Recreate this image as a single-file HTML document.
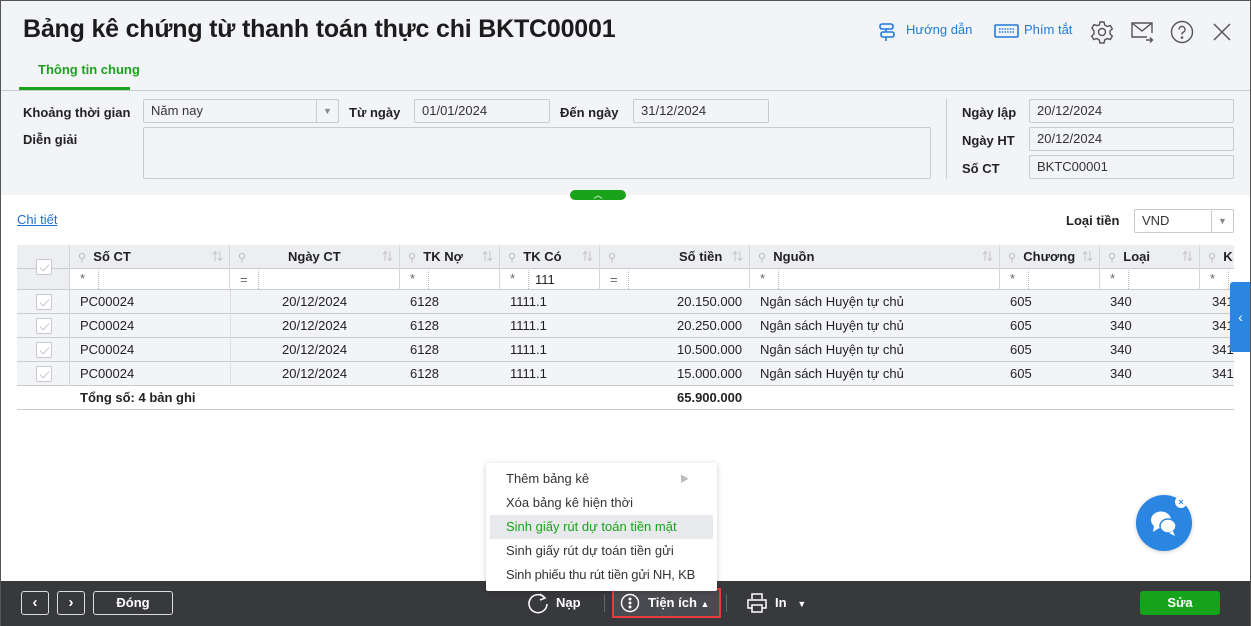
<!DOCTYPE html>
<html><head><meta charset="utf-8"><style>
*{box-sizing:border-box;margin:0;padding:0}
body{width:1251px;height:626px;overflow:hidden;font-family:"Liberation Sans","Noto Sans CJK SC",sans-serif;font-size:13px;color:#222;background:#fff;position:relative}
.a{position:absolute}
.frame{position:absolute;inset:0;border:1px solid #555;border-bottom:none;pointer-events:none}
.hdr{position:absolute;left:0;top:0;width:1251px;height:195px;background:#f3f4f8}
.lbl{position:absolute;font-weight:bold;font-size:13px;color:#222}
.inp{position:absolute;background:#f3f4f8;border:1px solid #c9cbd1;border-radius:2px;font-size:13px;color:#333;padding:0 0 0 7px;line-height:22px;height:24px}
.th{position:absolute;top:245px;height:24px;line-height:24px;font-weight:bold;border-right:1px solid #d4d6db}
.cell{position:absolute;height:24px;line-height:24px;white-space:nowrap}
.ck{position:absolute;width:16px;height:16px;border:1px solid #c6c8cc;border-radius:2px;background:#fff}
.ck::after{content:"";position:absolute;left:5px;top:2px;width:4px;height:8px;border:solid #c6c8cc;border-width:0 1.3px 1.3px 0;transform:rotate(45deg)}
.pin{color:#bbb;font-weight:normal;font-size:11px}
.sort{position:absolute;right:6px;color:#bbb;font-weight:normal;font-size:11px}
.menu div{height:24px;line-height:24px;padding-left:20px;font-size:13px;color:#333;white-space:nowrap}
.foot{position:absolute;left:0;top:581px;width:1251px;height:45px;background:#38393d}
.bb{position:absolute;top:591px;height:24px;border:1px solid #ddd;border-radius:3px;color:#fff;text-align:center;line-height:22px;font-weight:bold}
.dv{position:absolute;top:270px;height:19px;border-left:1px dotted #bbb}
</style></head><body>
<div class="hdr"></div>
<div class="a" style="left:23px;top:15px;font-size:25px;font-weight:bold;color:#1c1c1c;letter-spacing:-0.2px">Bảng kê chứng từ thanh toán thực chi BKTC00001</div>
<div class="a" style="left:38px;top:62px;font-size:13px;font-weight:bold;color:#1aa31a">Thông tin chung</div>
<div class="a" style="left:19px;top:87px;width:111px;height:3px;background:#1aa31a"></div>
<div class="a" style="left:0;top:90px;width:1251px;height:1px;background:#c9cbd1"></div>

<svg class="a" style="left:878px;top:22px" width="18" height="20" viewBox="0 0 18 20" fill="none" stroke="#1e7ad9" stroke-width="1.6"><rect x="2" y="2" width="13" height="5" rx="2"/><rect x="3" y="10" width="13" height="5" rx="2"/><path d="M8 7v3M8 15v4"/></svg>
<div class="a" style="left:906px;top:22px;color:#1e7ad9;font-size:13px">Hướng dẫn</div>
<svg class="a" style="left:994px;top:24px" width="25" height="14" viewBox="0 0 25 14" fill="none" stroke="#1e7ad9" stroke-width="1.6"><rect x="1" y="1" width="23" height="12" rx="1"/><path d="M5 5h15M5 8h15" stroke-dasharray="1.5 1.2"/></svg>
<div class="a" style="left:1024px;top:22px;color:#1e7ad9;font-size:13px">Phím tắt</div>
<svg class="a" style="left:1090px;top:20px" width="24" height="24" viewBox="0 0 24 24" fill="none" stroke="#555" stroke-width="1.4"><circle cx="12" cy="12" r="3.5"/><path d="M10 2h4l.7 3 2.6 1.5 3-1 2 3.4-2.3 2.1v3l2.3 2.1-2 3.4-3-1-2.6 1.5-.7 3h-4l-.7-3-2.6-1.5-3 1-2-3.4 2.3-2.1v-3L2 8l2-3.4 3 1L9.4 5z"/></svg>
<svg class="a" style="left:1130px;top:21px" width="24" height="22" viewBox="0 0 24 22" fill="none" stroke="#555" stroke-width="1.4"><path d="M17 16H2V2h20v10"/><path d="M2 2l10 8 10-8"/><path d="M16 19h6M20 16.5l2.5 2.5-2.5 2.5"/></svg>
<svg class="a" style="left:1170px;top:20px" width="24" height="24" viewBox="0 0 24 24" fill="none" stroke="#555" stroke-width="1.4"><circle cx="12" cy="12" r="10.5"/><path d="M9 9.5a3 3 0 1 1 4 2.8c-1 .4-1 1-1 2.2"/><circle cx="12" cy="17.5" r=".6" fill="#555"/></svg>
<svg class="a" style="left:1212px;top:22px" width="20" height="20" viewBox="0 0 20 20" stroke="#555" stroke-width="1.5"><path d="M2 2l16 16M18 2L2 18"/></svg>

<div class="lbl" style="left:23px;top:105px">Khoảng thời gian</div>
<div class="inp" style="left:143px;top:99px;width:196px;background:#f3f4f8">Năm nay<span style="position:absolute;right:0;top:0;width:22px;height:22px;border-left:1px solid #c9cbd1;text-align:center;color:#888;font-size:9px">▼</span></div>
<div class="lbl" style="left:349px;top:105px">Từ ngày</div>
<div class="inp" style="left:414px;top:99px;width:136px">01/01/2024</div>
<div class="lbl" style="left:560px;top:105px">Đến ngày</div>
<div class="inp" style="left:633px;top:99px;width:136px">31/12/2024</div>
<div class="lbl" style="left:23px;top:132px">Diễn giải</div>
<div class="inp" style="left:143px;top:127px;width:788px;height:52px"></div>
<div class="a" style="left:946px;top:99px;width:1px;height:80px;background:#c9cbd1"></div>
<div class="lbl" style="left:962px;top:105px">Ngày lập</div>
<div class="inp" style="left:1029px;top:99px;width:205px">20/12/2024</div>
<div class="lbl" style="left:962px;top:133px">Ngày HT</div>
<div class="inp" style="left:1029px;top:127px;width:205px">20/12/2024</div>
<div class="lbl" style="left:962px;top:161px">Số CT</div>
<div class="inp" style="left:1029px;top:155px;width:205px">BKTC00001</div>
<div class="a" style="left:570px;top:190px;width:56px;height:10px;background:#1aa31a;border-radius:5px;color:#fff;text-align:center;font-size:9px;line-height:10px">︿</div>

<div class="a" style="left:17px;top:212px;color:#1e6fd0;text-decoration:underline">Chi tiết</div>
<div class="lbl" style="left:1066px;top:213px">Loại tiền</div>
<div class="inp" style="left:1134px;top:209px;width:100px;background:#fff">VND<span style="position:absolute;right:0;top:0;width:22px;height:22px;border-left:1px solid #c9cbd1;text-align:center;color:#888;font-size:9px">▼</span></div>

<div class="a" style="left:17px;top:245px;width:1217px;height:24px;background:#eceef2"></div>
<div class="a" style="left:17px;top:269px;width:52px;height:21px;background:#eceef2"></div>
<div class="a" style="left:17px;top:268px;width:1217px;height:1px;background:#c9cbd1"></div>
<div class="a" style="left:17px;top:290px;width:1217px;height:96px;background:#f3f4f8"></div>
<div class="a" style="left:17px;top:289px;width:1217px;height:1px;background:#c9cbd1"></div>
<div class="a" style="left:17px;top:313px;width:1217px;height:1px;background:#c9cbd1"></div>
<div class="a" style="left:17px;top:337px;width:1217px;height:1px;background:#c9cbd1"></div>
<div class="a" style="left:17px;top:361px;width:1217px;height:1px;background:#c9cbd1"></div>
<div class="a" style="left:17px;top:385px;width:1217px;height:1px;background:#c9cbd1"></div>
<div class="a" style="left:17px;top:409px;width:1217px;height:1px;background:#c9cbd1"></div>
<div class="ck" style="left:36px;top:259px"></div>
<div class="a" style="left:69px;top:245px;width:1px;height:141px;background:#d4d6db"></div>

<div class="th" style="left:70px;width:160px;padding-left:8px"><span class="pin">⚲</span>&nbsp; Số CT<span class="sort">⇅</span></div>
<div class="th" style="left:230px;width:170px;padding-left:8px"><span class="pin">⚲</span><span style="position:absolute;left:58px">Ngày CT</span><span class="sort">⇅</span></div>
<div class="th" style="left:400px;width:100px;padding-left:8px"><span class="pin">⚲</span>&nbsp; TK Nợ<span class="sort">⇅</span></div>
<div class="th" style="left:500px;width:100px;padding-left:8px"><span class="pin">⚲</span>&nbsp; TK Có<span class="sort">⇅</span></div>
<div class="th" style="left:600px;width:150px;padding-left:8px"><span class="pin">⚲</span><span style="position:absolute;left:79px">Số tiền</span><span class="sort">⇅</span></div>
<div class="th" style="left:750px;width:250px;padding-left:8px"><span class="pin">⚲</span>&nbsp; Nguồn<span class="sort">⇅</span></div>
<div class="th" style="left:1000px;width:100px;padding-left:8px"><span class="pin">⚲</span>&nbsp; Chương<span class="sort">⇅</span></div>
<div class="th" style="left:1100px;width:100px;padding-left:8px"><span class="pin">⚲</span>&nbsp; Loại<span class="sort">⇅</span></div>
<div class="th" style="left:1200px;width:34px;padding-left:8px;border:none;overflow:hidden"><span class="pin">⚲</span>&nbsp; K</div>

<div class="a" style="left:229px;top:269px;width:1px;height:21px;background:#d4d6db"></div>
<div class="a" style="left:399px;top:269px;width:1px;height:21px;background:#d4d6db"></div>
<div class="a" style="left:499px;top:269px;width:1px;height:21px;background:#d4d6db"></div>
<div class="a" style="left:599px;top:269px;width:1px;height:21px;background:#d4d6db"></div>
<div class="a" style="left:749px;top:269px;width:1px;height:21px;background:#d4d6db"></div>
<div class="a" style="left:999px;top:269px;width:1px;height:21px;background:#d4d6db"></div>
<div class="a" style="left:1099px;top:269px;width:1px;height:21px;background:#d4d6db"></div>
<div class="a" style="left:1199px;top:269px;width:1px;height:21px;background:#d4d6db"></div>
<div class="dv" style="left:98px"></div><div class="dv" style="left:258px"></div><div class="dv" style="left:428px"></div><div class="dv" style="left:528px"></div><div class="dv" style="left:628px"></div><div class="dv" style="left:778px"></div><div class="dv" style="left:1028px"></div><div class="dv" style="left:1128px"></div><div class="dv" style="left:1228px"></div>

<div class="cell" style="left:80px;top:267px;color:#666">*</div>
<div class="cell" style="left:240px;top:268px;color:#666">=</div>
<div class="cell" style="left:410px;top:267px;color:#666">*</div>
<div class="cell" style="left:510px;top:267px;color:#666">*</div>
<div class="cell" style="left:535px;top:268px">111</div>
<div class="cell" style="left:610px;top:268px;color:#666">=</div>
<div class="cell" style="left:760px;top:267px;color:#666">*</div>
<div class="cell" style="left:1010px;top:267px;color:#666">*</div>
<div class="cell" style="left:1110px;top:267px;color:#666">*</div>
<div class="cell" style="left:1210px;top:267px;color:#666">*</div>

<div class="ck" style="left:36px;top:294px"></div><div class="ck" style="left:36px;top:318px"></div><div class="ck" style="left:36px;top:342px"></div><div class="ck" style="left:36px;top:366px"></div>

<div class="a" style="left:0;top:290px;width:1251px">
<div class="cell" style="left:80px;top:0">PC00024</div><div class="cell" style="left:282px;top:0">20/12/2024</div><div class="cell" style="left:410px;top:0">6128</div><div class="cell" style="left:510px;top:0">1111.1</div><div class="cell" style="left:677px;top:0">20.150.000</div><div class="cell" style="left:760px;top:0">Ngân sách Huyện tự chủ</div><div class="cell" style="left:1010px;top:0">605</div><div class="cell" style="left:1110px;top:0">340</div><div class="cell" style="left:1212px;top:0">341</div>
<div class="cell" style="left:80px;top:24px">PC00024</div><div class="cell" style="left:282px;top:24px">20/12/2024</div><div class="cell" style="left:410px;top:24px">6128</div><div class="cell" style="left:510px;top:24px">1111.1</div><div class="cell" style="left:677px;top:24px">20.250.000</div><div class="cell" style="left:760px;top:24px">Ngân sách Huyện tự chủ</div><div class="cell" style="left:1010px;top:24px">605</div><div class="cell" style="left:1110px;top:24px">340</div><div class="cell" style="left:1212px;top:24px">341</div>
<div class="cell" style="left:80px;top:48px">PC00024</div><div class="cell" style="left:282px;top:48px">20/12/2024</div><div class="cell" style="left:410px;top:48px">6128</div><div class="cell" style="left:510px;top:48px">1111.1</div><div class="cell" style="left:677px;top:48px">10.500.000</div><div class="cell" style="left:760px;top:48px">Ngân sách Huyện tự chủ</div><div class="cell" style="left:1010px;top:48px">605</div><div class="cell" style="left:1110px;top:48px">340</div><div class="cell" style="left:1212px;top:48px">341</div>
<div class="cell" style="left:80px;top:72px">PC00024</div><div class="cell" style="left:282px;top:72px">20/12/2024</div><div class="cell" style="left:410px;top:72px">6128</div><div class="cell" style="left:510px;top:72px">1111.1</div><div class="cell" style="left:677px;top:72px">15.000.000</div><div class="cell" style="left:760px;top:72px">Ngân sách Huyện tự chủ</div><div class="cell" style="left:1010px;top:72px">605</div><div class="cell" style="left:1110px;top:72px">340</div><div class="cell" style="left:1212px;top:72px">341</div>
<div class="cell" style="left:80px;top:96px;font-weight:bold">Tổng số: 4 bản ghi</div><div class="cell" style="left:677px;top:96px;font-weight:bold">65.900.000</div>
</div>
<div class="a" style="left:230px;top:290px;width:0;height:96px;border-left:1px dotted #ccc"></div>
<div class="a" style="left:1230px;top:282px;width:21px;height:70px;background:#2a86e0;border-radius:3px 0 0 3px;color:#fff;text-align:center;line-height:70px;font-size:14px">‹</div>

<div class="a" style="left:1136px;top:495px;width:56px;height:56px;border-radius:50%;background:#2a86e0;box-shadow:0 1px 4px rgba(0,0,0,.2)"></div>
<svg class="a" style="left:1148px;top:507px" width="32" height="32" viewBox="0 0 32 32" fill="#fff"><ellipse cx="13" cy="13" rx="10" ry="8.5"/><path d="M6 19l-1 6 6-4z"/><ellipse cx="20" cy="19" rx="8" ry="7" stroke="#2a86e0" stroke-width="1.5"/><path d="M25 24l2 5-6-3z"/></svg>
<div class="a" style="left:1175px;top:496px;width:12px;height:12px;border-radius:50%;background:#fff;color:#2a86e0;font-size:9px;text-align:center;line-height:12px;font-weight:bold">×</div>

<div class="foot"></div>
<div class="bb" style="left:21px;width:28px;font-size:15px">‹</div>
<div class="bb" style="left:57px;width:28px;font-size:15px">›</div>
<div class="bb" style="left:93px;width:80px">Đóng</div>
<svg class="a" style="left:527px;top:592px" width="22" height="22" viewBox="0 0 22 22" fill="none" stroke="#fff" stroke-width="1.5"><path d="M18 6A9 9 0 1 0 20 12"/><path d="M13 2l5 4-5 2"/></svg>
<div class="a" style="left:556px;top:595px;color:#fff;font-weight:bold">Nạp</div>
<div class="a" style="left:604px;top:594px;width:1px;height:18px;background:#666"></div>
<div class="a" style="left:612px;top:588px;width:109px;height:30px;border:2px solid #e63c3c;background:#4a4b50"></div>
<svg class="a" style="left:620px;top:593px" width="20" height="20" viewBox="0 0 20 20" fill="none" stroke="#fff" stroke-width="1.4"><circle cx="10" cy="10" r="8.5"/><circle cx="10" cy="6" r=".8" fill="#fff"/><circle cx="10" cy="10" r=".8" fill="#fff"/><circle cx="10" cy="14" r=".8" fill="#fff"/></svg>
<div class="a" style="left:648px;top:595px;color:#fff;font-weight:bold">Tiện ích <span style="font-size:9px">▲</span></div>
<div class="a" style="left:726px;top:594px;width:1px;height:18px;background:#666"></div>
<svg class="a" style="left:746px;top:592px" width="22" height="22" viewBox="0 0 22 22" fill="none" stroke="#fff" stroke-width="1.5"><path d="M6 7V2h10v5M6 16H2V8h18v8h-4"/><rect x="6" y="13" width="10" height="7"/></svg>
<div class="a" style="left:775px;top:595px;color:#fff;font-weight:bold">In &nbsp;&nbsp;<span style="font-size:9px">▼</span></div>
<div class="a" style="left:1140px;top:591px;width:80px;height:24px;background:#14a31a;border-radius:3px;color:#fff;font-weight:bold;text-align:center;line-height:24px">Sửa</div>

<div class="a menu" style="left:486px;top:463px;width:231px;height:128px;background:#fff;box-shadow:0 1px 6px rgba(0,0,0,.2);padding-top:4px;border-radius:2px">
<div>Thêm bảng kê<span style="position:absolute;right:28px;color:#bbb;font-size:9px">▶</span></div>
<div>Xóa bảng kê hiện thời</div>
<div style="background:#e8e9ec;color:#1aa31a;margin:0 4px;padding-left:16px">Sinh giấy rút dự toán tiền mặt</div>
<div>Sinh giấy rút dự toán tiền gửi</div>
<div style="letter-spacing:-0.2px">Sinh phiếu thu rút tiền gửi NH, KB</div>
</div>
<div class="frame"></div>
</body></html>
